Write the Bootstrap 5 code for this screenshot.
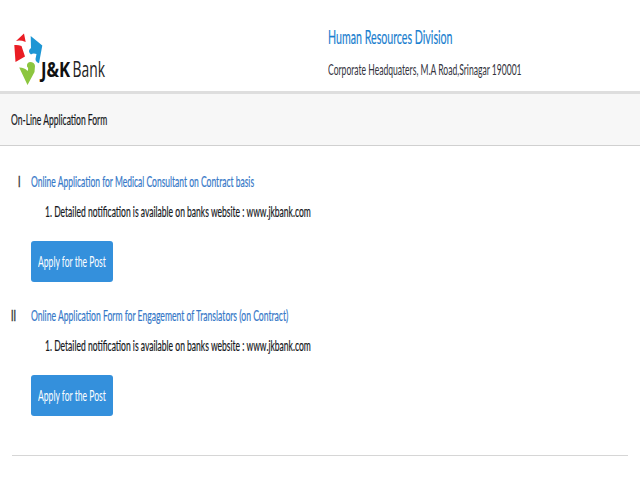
<!DOCTYPE html>
<html lang="en">
<head>
<meta charset="utf-8">
<meta name="viewport" content="width=device-width, initial-scale=1">
<title>J&amp;K Bank - Human Resources Division</title>
<link href="https://cdn.jsdelivr.net/npm/bootstrap@5.3.0/dist/css/bootstrap.min.css" rel="stylesheet">
<style>
body{font-family:Lato,"Open Sans",sans-serif;font-size:15px;line-height:20px;color:#16181c;background:#fff;overflow:hidden}
.cond{display:inline-block;white-space:nowrap;transform:scaleX(var(--sx,.6));transform-origin:0 50%;-webkit-text-stroke:.2px currentColor}
.c1{--sx:.546}.c2{--sx:.571;-webkit-text-stroke:0}.c3{--sx:.568}.c4{--sx:.567}.c5{--sx:.569}.c6{--sx:.571;-webkit-text-stroke:0}.c7{--sx:.573}
.site-head{height:91px}
.head-text{min-width:0;overflow:hidden}
.logo-box{width:328px;padding:32px 0 0 12px}
.head-title{font-size:19.5px;line-height:26px;color:#1b80cf;padding-top:24px}
.head-sub{margin-top:9px;color:#33333d}
.title-bar{height:55px;background:#f7f7f7;border-top:3px solid #dedede;border-bottom:1px solid #d0d0d0;padding:15px 0 0 11px}
.post{height:134px}
.post-num{width:30.5px;padding-left:18px;color:#333}
.post-num .cond{-webkit-text-stroke:.5px currentColor}
.post-num.two{padding-left:11px}
.post-link{color:#3578c8;text-decoration:none}
.post-note{padding-left:14px;margin-top:10px}
.btn-apply{width:82.5px;height:41px;margin:20px 0 0;background:#3490dc;color:#fff;border-radius:3px;line-height:20px;font-size:15px;padding:0 0 1px 7.5px;text-align:left;border:0}
.btn-apply .cond{vertical-align:top}
.posts{padding-top:25px}
.end-line{margin:16px 12.5px 0 12px;height:1px;background:#d6d6d6}
.wordmark{font-family:"Open Sans",sans-serif;font-size:22px}
</style>
</head>
<body>
<header class="site-head d-flex">
<div class="logo-box flex-shrink-0">
<svg width="110" height="54" viewBox="12 32 110 54">
<path d="M24 33.5 25.7 42 Q20 39.8 16 41Z M14.3 45 Q18 44.5 21.5 46 L25 56.5 15.5 62Z" fill="#ea1d24"/>
<path d="M30.7 36 42.3 45.5 39 63.2 Q35.5 62 35.5 59 L36.5 54 Q33 53 31 54.5 Q28 52 29.5 49.5 L31 48Z" fill="#1d96d4"/>
<path d="M19.2 67.5 Q25 67.5 27.5 71 Q29 68.5 27 66.5 Q26.5 62.5 30 62 Q34.5 62 35 66 L34.5 72 27.5 85Z" fill="#8cc63f"/>
<text class="wordmark" transform="translate(41 77) scale(.76 1)" font-weight="700" fill="#111">J&amp;K</text>
<text class="wordmark" transform="translate(72.5 77) scale(.63 1)" fill="#222">Bank</text>
</svg>
</div>
<div class="head-text">
<div class="head-title"><span class="cond c1">Human Resources Division</span></div>
<div class="head-sub"><span class="cond c2">Corporate Headquaters, M.A Road,Srinagar 190001</span></div>
</div>
</header>
<div class="title-bar"><span class="cond c3">On-Line Application Form</span></div>
<main class="posts">
<section class="post d-flex">
<div class="post-num"><span class="cond">I</span></div>
<div>
<a class="post-link d-block" href="#"><span class="cond c4">Online Application for Medical Consultant on Contract basis</span></a>
<div class="post-note"><span class="cond c5">1. Detailed notification is available on banks website : www.jkbank.com</span></div>
<button class="btn btn-apply d-block"><span class="cond c6">Apply for the Post</span></button>
</div>
</section>
<section class="post d-flex">
<div class="post-num two"><span class="cond">II</span></div>
<div>
<a class="post-link d-block" href="#"><span class="cond c7">Online Application Form for Engagement of Translators (on Contract)</span></a>
<div class="post-note"><span class="cond c5">1. Detailed notification is available on banks website : www.jkbank.com</span></div>
<button class="btn btn-apply d-block"><span class="cond c6">Apply for the Post</span></button>
</div>
</section>
<div class="end-line"></div>
</main>
<script src="https://cdn.jsdelivr.net/npm/bootstrap@5.3.0/dist/js/bootstrap.bundle.min.js"></script>
</body>
</html>
